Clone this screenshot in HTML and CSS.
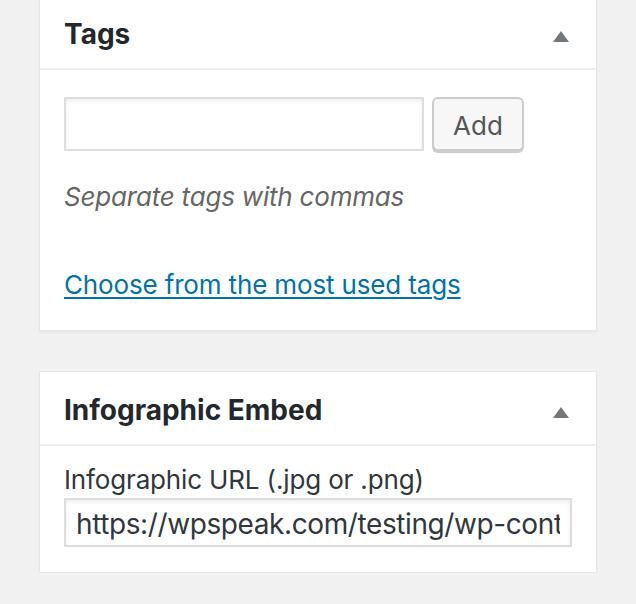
FILE: index.html
```html
<!DOCTYPE html>
<html lang="en">
<head>
    <meta charset="UTF-8">
    <meta name="viewport" content="width=device-width, initial-scale=1.0">
    <title>Post Sidebar</title>
    <link rel="stylesheet" href="styles.css">
</head>
<body>
    <div class="sidebar">
        <div class="postbox postbox-tags">
            <div class="postbox-header">
                <h2>Tags</h2>
                <span class="toggle-arrow"></span>
            </div>
            <div class="inside">
                <div class="tag-add">
                    <input type="text" class="tag-input" value="">
                    <button class="button">Add</button>
                </div>
                <p class="howto">Separate tags with commas</p>
                <p class="tag-cloud-link"><a href="#">Choose from the most used tags</a></p>
            </div>
        </div>

        <div class="postbox">
            <div class="postbox-header">
                <h2>Infographic Embed</h2>
                <span class="toggle-arrow"></span>
            </div>
            <div class="inside inside-embed">
                <label class="field-label" for="infographicUrl">Infographic URL (.jpg or .png)</label>
                <input type="text" id="infographicUrl" class="url-input" value="https://wpspeak.com/testing/wp-content/uploads/infographic.png">
            </div>
        </div>
    </div>
</body>
</html>
```

FILE: styles.css
```css
body {
    font-family: Inter, "Liberation Sans", sans-serif;
    background-color: #f1f1f1;
    margin: 0;
    color: #444;
}
.sidebar {
    display: flex;
    flex-direction: column;
    gap: 40px;
    width: 558px;
    margin: -5px 0 0 39px;
}
.postbox {
    background-color: #fff;
    border: 1px solid #e5e5e5;
    box-shadow: 0 2px 2px rgba(0, 0, 0, 0.04);
}
.postbox-header {
    display: flex;
    justify-content: space-between;
    align-items: center;
    padding: 18px 27px 14px 24px;
    border-bottom: 2px solid #eee;
}
.postbox-header h2 {
    margin: 0;
    font-size: 28px;
    line-height: 40px;
    font-weight: 700;
    color: #23282d;
}
.toggle-arrow {
    width: 0;
    height: 0;
    margin-top: 4px;
    border-left: 8px solid transparent;
    border-right: 8px solid transparent;
    border-bottom: 11px solid #72777c;
}
.inside {
    padding: 27px 24px 27px;
}
.tag-add {
    display: flex;
    gap: 8px;
}
.tag-input {
    width: 360px;
    height: 54px;
    box-sizing: border-box;
    border: 2px solid #ddd;
    box-shadow: inset 0 2px 4px rgba(0, 0, 0, 0.07);
    font-family: inherit;
    font-size: 28px;
    padding: 0 10px;
}
.button {
    width: 92px;
    height: 54px;
    box-sizing: border-box;
    border: 2px solid #ccc;
    border-radius: 6px;
    background-color: #f7f7f7;
    box-shadow: 0 2px 0 #ccc;
    font-family: inherit;
    font-size: 26px;
    color: #555;
    padding: 2px 0 0;
}
.howto {
    margin: 28px 0 0;
    font-size: 26px;
    line-height: 36px;
    font-style: italic;
    letter-spacing: -0.2px;
    color: #666;
}
.tag-cloud-link {
    margin: 52px 0 0;
    font-size: 26px;
    line-height: 36px;
    letter-spacing: -0.15px;
}
.tag-cloud-link a {
    color: #0073aa;
    text-decoration-thickness: 2px;
    text-underline-offset: 3px;
}
.inside-embed {
    padding: 16px 24px 25px;
}
.field-label {
    display: block;
    font-size: 26px;
    line-height: 36px;
    letter-spacing: -0.15px;
    color: #32373c;
}
.url-input {
    display: block;
    width: 100%;
    height: 49px;
    box-sizing: border-box;
    border: 2px solid #ddd;
    box-shadow: inset 0 2px 4px rgba(0, 0, 0, 0.07);
    font-family: inherit;
    font-size: 28px;
    letter-spacing: -0.4px;
    color: #32373c;
    padding: 2px 10px 0;
}
```
